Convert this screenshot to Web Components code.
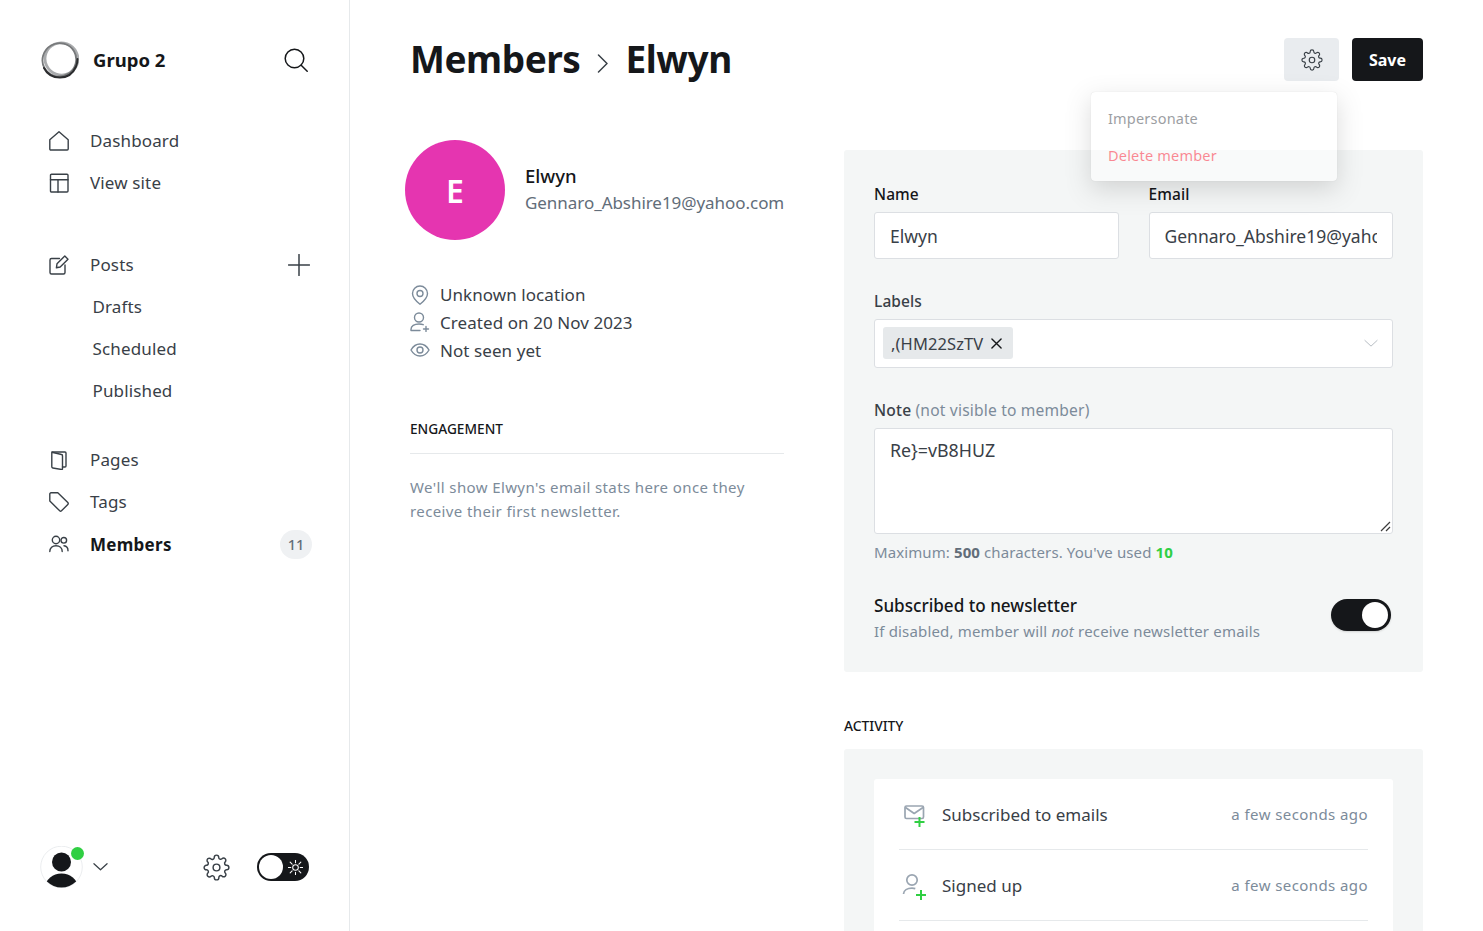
<!DOCTYPE html>
<html lang="en">
<head>
<meta charset="utf-8">
<title>Members - Elwyn</title>
<style>
  html, body { margin: 0; height: 100%; overflow: hidden; background: #fff; }
  body { font-family: "Noto Sans", "Open Sans", sans-serif; color: #15171a; }
</style>
</head>
<body>
<member-app></member-app>

<script>
const GEAR = `<path d="M12 15a3 3 0 1 0 0-6 3 3 0 0 0 0 6z"/><path d="M19.4 15a1.65 1.65 0 0 0 .33 1.82l.06.06a2 2 0 0 1 0 2.83 2 2 0 0 1-2.83 0l-.06-.06a1.65 1.65 0 0 0-1.82-.33 1.65 1.65 0 0 0-1 1.51V21a2 2 0 0 1-2 2 2 2 0 0 1-2-2v-.09A1.65 1.65 0 0 0 9 19.4a1.65 1.65 0 0 0-1.82.33l-.06.06a2 2 0 0 1-2.83 0 2 2 0 0 1 0-2.83l.06-.06a1.65 1.65 0 0 0 .33-1.82 1.65 1.65 0 0 0-1.51-1H3a2 2 0 0 1-2-2 2 2 0 0 1 2-2h.09A1.65 1.65 0 0 0 4.6 9a1.65 1.65 0 0 0-.33-1.82l-.06-.06a2 2 0 0 1 0-2.83 2 2 0 0 1 2.83 0l.06.06a1.65 1.65 0 0 0 1.82.33H9a1.65 1.65 0 0 0 1-1.51V3a2 2 0 0 1 2-2 2 2 0 0 1 2 2v.09a1.65 1.65 0 0 0 1 1.51 1.65 1.65 0 0 0 1.82-.33l.06-.06a2 2 0 0 1 2.83 0 2 2 0 0 1 0 2.83l-.06.06a1.65 1.65 0 0 0-.33 1.82V9a1.65 1.65 0 0 0 1.51 1H21a2 2 0 0 1 2 2 2 2 0 0 1-2 2h-.09a1.65 1.65 0 0 0-1.51 1z"/>`;

const ICONS = {
  home: `<path d="M.8 8.800 10 .8l9.200 8V18a1 1 0 0 1-1 1H1.800a1 1 0 0 1-1-1z"/>`,
  layout: `<rect x="1.500" y="1.200" width="17.500" height="17.800" rx="1"/><path d="M1.500 6.800H19M9 6.800V19"/>`,
  edit: `<path d="M10.500 3.500H2.500A1.500 1.500 0 0 0 1 5v12.500A1.500 1.500 0 0 0 2.500 19h12a1.500 1.500 0 0 0 1.500-1.500V10"/><path d="M8 8.800 15.800 1l3.200 3.200-7.800 7.800-3.800.8z"/>`,
  book: `<path d="M3 2.200 12.500 4.500a1.200 1.200 0 0 1 1 1.200v13a.8.8 0 0 1-1 .8L3.800 18a1.200 1.200 0 0 1-1-1.200V3z"/><path d="M3 2h13a1 1 0 0 1 1 1v13a1 1 0 0 1-1 1h-2.500"/>`,
  tag: `<path d="M.8 2a1.200 1.200 0 0 1 1.200-1.200h6.800l10 9.800a1.300 1.300 0 0 1 0 1.800l-6.300 6.400a1.300 1.300 0 0 1-1.800 0L.8 9z"/>`,
  members: `<circle cx="7" cy="6" r="3.700"/><path d="M.8 17.500c0-3.600 2.600-5.800 6.200-5.800s6.200 2.200 6.200 5.800"/><circle cx="14.800" cy="6.300" r="2.800"/><path d="M15 11.800c2.300.2 4 2 4 5"/>`,
  search: `<circle cx="10.500" cy="10.500" r="9.300"/><path d="m17.200 17.200 6 6"/>`,
  plus: `<path d="M11 .5v21M.5 11h21"/>`,
  chevron: `<path d="M1 1.500 8 8l7-6.500"/>`,
  chevronRight: `<path d="M1.500 1 10 9.500 1.500 18"/>`,
  gear: GEAR,
  pin: `<path d="M10 19.200C6.500 16.500 2.500 13 2.500 8.500a7.500 7.500 0 0 1 15 0c0 4.500-4 8-7.500 10.700z"/><circle cx="10" cy="8.500" r="3"/>`,
  useradd: `<circle cx="9" cy="5.500" r="4.500"/><path d="M1 18.500v-1.300c0-3.200 3.200-5.200 8-5.200 1.600 0 3 .2 4.200.7M1 18.500h9"/><path d="M16 14.500v5M13.500 17h5"/>`,
  eye: `<path d="M1 8c2.200-3.900 5.300-6 9-6s6.800 2.100 9 6c-2.200 3.900-5.300 6-9 6s-6.800-2.100-9-6z"/><circle cx="10" cy="8" r="3"/>`,
  close: `<path d="M1 1l10 10M11 1 1 11"/>`,
  sun: `<circle cx="8" cy="8" r="3"/><path d="M8 0v3M8 13v3M0 8h3M13 8h3M2.300 2.300l2.100 2.100M11.600 11.600l2.100 2.100M2.300 13.700l2.100-2.100M11.600 4.400l2.100-2.100"/>`
};

const VIEWBOX = {
  home: "0 0 20 20", layout: "0 0 20 20", edit: "0 0 20 20", book: "0 0 20 20", tag: "0 0 20 20",
  members: "0 0 20 20", search: "0 0 24 24", plus: "0 0 22 22", chevron: "0 0 16 10", chevronRight: "0 0 12 19",
  gear: "0 0 24 24", pin: "0 0 20 20", useradd: "0 0 20 20", eye: "0 0 20 16", close: "0 0 12 12", sun: "0 0 16 16"
};

class GhIcon extends HTMLElement {
  connectedCallback() {
    const name = this.getAttribute("name");
    const w = this.getAttribute("w") || 20;
    const h = this.getAttribute("h") || w;
    const sw = this.getAttribute("sw") || 1.4;
    this.attachShadow({ mode: "open" }).innerHTML = `
      <style>
        :host { display: inline-flex; flex: none; color: inherit; }
        svg { display: block; fill: none; stroke: currentColor; stroke-linecap: round; stroke-linejoin: round; }
      </style>
      <svg width="${w}" height="${h}" viewBox="${VIEWBOX[name]}" stroke-width="${sw}">${ICONS[name]}</svg>`;
  }
}
customElements.define("gh-icon", GhIcon);

class NavItem extends HTMLElement {
  connectedCallback() {
    const icon = this.getAttribute("icon");
    this.attachShadow({ mode: "open" }).innerHTML = `
      <style>
        :host { display: flex; align-items: center; height: 42px; padding: 0 37px 0 49px; color: #394047; font-size: 17px; letter-spacing: .14px; }
        :host([sub]) { padding-left: 92.500px; }
        :host([active]) { color: #15171a; font-weight: 700; font-size: 17px; letter-spacing: .28px; }
        gh-icon { margin-right: 21px; color: #394047; }
        .label { flex: 1; margin-top: -2px; }
        :host([active]) .label { margin-top: 0; }
      </style>
      ${icon ? `<gh-icon name="${icon}" w="20"></gh-icon>` : ""}
      <span class="label"><slot></slot></span>
      <slot name="end"></slot>`;
  }
}
customElements.define("nav-item", NavItem);

class ThemeSwitch extends HTMLElement {
  constructor() {
    super();
    this.attachShadow({ mode: "open" }).innerHTML = `
      <style>
        :host { display: flex; align-items: center; justify-content: flex-end; width: 52px; height: 28px; box-sizing: border-box; padding-right: 6px; border-radius: 14px; background: #15171a; position: relative; color: #fff; }
        .knob { position: absolute; left: 2px; top: 2px; width: 24px; height: 24px; border-radius: 50%; background: #fff; }
      </style>
      <span class="knob"></span>
      <gh-icon name="sun" w="15" sw="1.100"></gh-icon>`;
  }
}
customElements.define("theme-switch", ThemeSwitch);

class AppSidebar extends HTMLElement {
  constructor() {
    super();
    this.attachShadow({ mode: "open" }).innerHTML = `
      <style>
        :host { display: flex; flex-direction: column; flex: none; width: 350px; height: 100vh; box-sizing: border-box; border-right: 1px solid #e6e9eb; }
        .brand { display: flex; align-items: center; height: 40px; margin-top: 40px; padding: 0 41px; font-weight: 700; font-size: 18.500px; color: #15171a; }
        .brand svg { flex: none; margin-right: 14px; }
        .brand span { flex: 1; margin-top: -2px; }
        nav { margin-top: 40px; }
        nav + nav { margin-top: 40px; }
        nav.pages { margin-top: 27px; }
        .plus { color: #394047; margin-right: 2px; }
        .badge { display: flex; align-items: center; justify-content: center; width: 32px; height: 29px; border-radius: 15px; background: #eff1f3; color: #626d79; font-size: 14.500px; font-weight: 500; letter-spacing: 0; }
        .foot { display: flex; align-items: center; margin-top: auto; height: 42px; padding: 0 40px 43px 40px; }
        .avatar { position: relative; width: 43px; height: 42px; flex: none; }
        .dot { position: absolute; left: 31px; top: 1px; width: 13px; height: 13px; border-radius: 50%; background: #30cf43; }
        .caret { margin-left: 10px; color: #394047; }
        .cog { margin-left: 95px; color: #394047; }
        theme-switch { margin-left: 27px; }
      </style>
      <div class="brand">
        <svg width="38" height="38" viewBox="0 0 38 38" fill="none">
          <ellipse cx="20" cy="17.500" rx="16.500" ry="16" stroke="#a9abad" stroke-width="2.800" transform="rotate(20 19 19)"/>
          <ellipse cx="18.500" cy="18.500" rx="17" ry="16.500" stroke="#77797b" stroke-width="1.800" transform="rotate(-30 19 19)"/>
          <path d="M3 27C6 33 12 36.500 19 36.500c7 0 13-4 16-11 1-2.500 1.500-5 1.500-7.500" stroke="#2b2c2e" stroke-width="2" stroke-linecap="round"/>
        </svg>
        <span>Grupo 2</span>
        <gh-icon name="search" w="24" sw="1.500" style="color:#15171a"></gh-icon>
      </div>
      <nav>
        <nav-item icon="home">Dashboard</nav-item>
        <nav-item icon="layout">View site</nav-item>
      </nav>
      <nav>
        <nav-item icon="edit">Posts<gh-icon slot="end" class="plus" name="plus" w="22" sw="1.500"></gh-icon></nav-item>
        <nav-item sub>Drafts</nav-item>
        <nav-item sub>Scheduled</nav-item>
        <nav-item sub>Published</nav-item>
      </nav>
      <nav class="pages">
        <nav-item icon="book">Pages</nav-item>
        <nav-item icon="tag">Tags</nav-item>
        <nav-item icon="members" active>Members<span slot="end" class="badge">11</span></nav-item>
      </nav>
      <div class="foot">
        <div class="avatar">
          <svg width="43" height="42" viewBox="0 0 43 42">
            <defs><clipPath id="c"><circle cx="21.500" cy="21" r="20.500"/></clipPath></defs>
            <circle cx="21.500" cy="21" r="20.800" fill="#fff" stroke="#e6e9eb" stroke-width=".8"/>
            <circle cx="21.500" cy="16" r="9.500" fill="#15171a"/>
            <ellipse cx="21.500" cy="41" rx="16" ry="13.500" fill="#15171a" clip-path="url(#c)"/>
          </svg>
          <span class="dot"></span>
        </div>
        <gh-icon class="caret" name="chevron" w="15" h="10" sw="1.300"></gh-icon>
        <gh-icon class="cog" name="gear" w="27" sw="1.300"></gh-icon>
        <theme-switch></theme-switch>
      </div>`;
  }
}
customElements.define("app-sidebar", AppSidebar);

class PageHeader extends HTMLElement {
  constructor() {
    super();
    this.attachShadow({ mode: "open" }).innerHTML = `
      <style>
        :host { display: flex; align-items: center; height: 43px; position: relative; }
        h1 { flex: 1; display: flex; align-items: center; margin: -2px 0 0; font-size: 37px; font-weight: 700; letter-spacing: -.45px; color: #15171a; }
        h1 gh-icon { margin: 10px 17px 0 16px; color: #394047; }
        button { border: 0; height: 43px; padding: 0; border-radius: 4px; font: inherit; display: flex; align-items: center; justify-content: center; }
        .cog { width: 55px; background: #e9ecef; color: #394047; margin-right: 13px; }
        .save { width: 71px; background: #15171a; color: #fff; font-weight: 700; font-size: 16px; }
      </style>
      <h1>Members<gh-icon name="chevronRight" w="12" h="19" sw="1.500"></gh-icon>Elwyn</h1>
      <button class="cog"><gh-icon name="gear" w="22" sw="1.250"></gh-icon></button>
      <button class="save">Save</button>
      <slot></slot>`;
  }
}
customElements.define("page-header", PageHeader);

class ActionMenu extends HTMLElement {
  constructor() {
    super();
    this.attachShadow({ mode: "open" }).innerHTML = `
      <style>
        :host { position: absolute; top: 54px; right: 86px; width: 246px; height: 89px; box-sizing: border-box; padding: 7px 17px; z-index: 5; background: #fff; border-radius: 4px; opacity: .5; box-shadow: 0 0 1px rgba(0,0,0,.3), 0 8px 24px rgba(0,0,0,.28); font-size: 14.500px; letter-spacing: .2px; color: #394047; }
        div { height: 37px; display: flex; align-items: center; }
        .del { color: #ff1a33; }
      </style>
      <div>Impersonate</div>
      <div class="del">Delete member</div>`;
  }
}
customElements.define("action-menu", ActionMenu);

class MemberSummary extends HTMLElement {
  constructor() {
    super();
    this.attachShadow({ mode: "open" }).innerHTML = `
      <style>
        :host { display: block; color: #394047; font-size: 17px; }
        .head { display: flex; align-items: center; margin-left: -5px; }
        .pic { width: 100px; height: 100px; flex: none; border-radius: 50%; background: #e535b0; color: #fff; display: flex; align-items: center; justify-content: center; font-size: 32px; font-weight: 600; margin-right: 20px; }
        .name { font-size: 18.500px; font-weight: 500; color: #15171a; line-height: 26px; margin-top: -2px; }
        .mail { line-height: 26px; margin: 1px 0 -1px; color: #626d79; white-space: nowrap; letter-spacing: -.05px; }
        .facts { margin-top: 40px; letter-spacing: .07px; }
        .fact { display: flex; align-items: center; height: 28px; }
        .fact gh-icon { width: 20px; justify-content: center; margin-right: 10px; color: #7c8b9a; }
        .fact:first-child gh-icon { margin-top: 1px; }
        h4 { margin: 55px 0 0; height: 35px; box-sizing: border-box; font-size: 13.700px; line-height: 20px; font-weight: 500; color: #15171a; border-bottom: 1px solid #e6e9eb; }
        p { margin: 21px 0 0; font-size: 15px; line-height: 24px; color: #7c8b9a; letter-spacing: .39px; }
      </style>
      <div class="head">
        <div class="pic">E</div>
        <div><div class="name">Elwyn</div><div class="mail">Gennaro_Abshire19@yahoo.com</div></div>
      </div>
      <div class="facts">
        <div class="fact"><gh-icon name="pin" w="20" sw="1.400"></gh-icon>Unknown location</div>
        <div class="fact"><gh-icon name="useradd" w="20" sw="1.400"></gh-icon>Created on 20 Nov 2023</div>
        <div class="fact"><gh-icon name="eye" w="20" h="16" sw="1.400"></gh-icon>Not seen yet</div>
      </div>
      <h4>ENGAGEMENT</h4>
      <p>We'll show Elwyn's email stats here once they receive their first newsletter.</p>`;
  }
}
customElements.define("member-summary", MemberSummary);

class FormField extends HTMLElement {
  connectedCallback() {
    this.attachShadow({ mode: "open" }).innerHTML = `
      <style>
        :host { display: block; min-width: 0; }
        .lab { height: 28px; line-height: 28px; margin-bottom: 4px; font-size: 15.500px; font-weight: 500; color: #15171a; letter-spacing: .1px; }
        .box { box-sizing: border-box; display: flex; align-items: center; height: 47px; padding: 0 15px; background: #fff; border: 1px solid #dcdfe3; border-radius: 3px; font-size: 17.500px; color: #394047; }
        .clip { overflow: hidden; white-space: nowrap; }
      </style>
      <div class="lab">${this.getAttribute("label")}</div>
      <div class="box"><div class="clip"><slot></slot></div></div>`;
  }
}
customElements.define("form-field", FormField);

class LabelPicker extends HTMLElement {
  constructor() {
    super();
    this.attachShadow({ mode: "open" }).innerHTML = `
      <style>
        :host { display: block; margin-top: 28px; }
        .lab { height: 28px; line-height: 28px; margin-bottom: 4px; font-size: 15.500px; font-weight: 500; color: #394047; letter-spacing: .1px; }
        .box { box-sizing: border-box; display: flex; align-items: center; justify-content: space-between; height: 49px; padding: 0 14px 0 8px; background: #fff; border: 1px solid #dcdfe3; border-radius: 3px; }
        .chip { display: flex; align-items: center; height: 32px; margin-top: -1px; padding: 0 11px 0 8px; border-radius: 3px; background: #e6e9eb; color: #394047; font-size: 16.500px; letter-spacing: .1px; }
        .chip gh-icon { margin-left: 8px; color: #15171a; }
        .arrow { color: #b4bac1; }
      </style>
      <div class="lab">Labels</div>
      <div class="box">
        <span class="chip">,(HM22SzTV<gh-icon name="close" w="11" sw="1.500"></gh-icon></span>
        <gh-icon class="arrow" name="chevron" w="14" h="9" sw="1.100"></gh-icon>
      </div>`;
  }
}
customElements.define("label-picker", LabelPicker);

class NoteField extends HTMLElement {
  constructor() {
    super();
    this.attachShadow({ mode: "open" }).innerHTML = `
      <style>
        :host { display: block; margin-top: 28px; }
        .lab { height: 28px; line-height: 28px; margin-bottom: 4px; font-size: 15.600px; font-weight: 500; color: #394047; letter-spacing: .18px; }
        .lab span { font-weight: 400; color: #7c8b9a; }
        .area { position: relative; box-sizing: border-box; height: 106px; padding: 8px 15px; background: #fff; border: 1px solid #dcdfe3; border-radius: 3px; font-size: 17.800px; line-height: 26px; color: #394047; }
        .grip { position: absolute; right: 1px; bottom: 1px; display: block; }
        .count { height: 24px; line-height: 24px; margin-top: 6px; font-size: 15px; color: #7c8b9a; letter-spacing: .1px; }
        .count b { font-weight: 700; color: #626d79; }
        .count b.ok { color: #30cf43; }
      </style>
      <div class="lab">Note <span>(not visible to member)</span></div>
      <div class="area">Re}=vB8HUZ<svg class="grip" width="11" height="11" viewBox="0 0 11 11" stroke="#3c3c3c" stroke-width="1.200" fill="none"><path d="M1 10 10 1M6 10l4-4"/></svg></div>
      <div class="count">Maximum: <b>500</b> characters. You've used <b class="ok">10</b></div>`;
  }
}
customElements.define("note-field", NoteField);

class NewsletterToggle extends HTMLElement {
  constructor() {
    super();
    this.attachShadow({ mode: "open" }).innerHTML = `
      <style>
        :host { display: flex; align-items: center; justify-content: space-between; margin: 29px 0 -1px; }
        .t { font-size: 17.100px; line-height: 26px; font-weight: 500; color: #15171a; }
        .d { font-size: 15px; line-height: 24px; color: #7c8b9a; letter-spacing: .17px; }
        .sw { position: relative; width: 60px; height: 32px; margin: -6px 2px 0 0; border-radius: 16px; background: #15171a; box-shadow: 0 1px 2px rgba(0,0,0,.15); }
        .sw i { position: absolute; right: 3px; top: 3px; width: 26px; height: 26px; border-radius: 50%; background: #fff; }
      </style>
      <div>
        <div class="t">Subscribed to newsletter</div>
        <div class="d">If disabled, member will <em>not</em> receive newsletter emails</div>
      </div>
      <div class="sw"><i></i></div>`;
  }
}
customElements.define("newsletter-toggle", NewsletterToggle);

class ActivityRow extends HTMLElement {
  connectedCallback() {
    const kind = this.getAttribute("kind");
    const art = kind === "mail"
      ? `<rect x="3" y="6" width="18.500" height="12.500" rx="1.500"/><path d="m3.500 7.500 8.700 6 8.800-6"/><path d="M17.500 17v10M12.500 22h10" stroke="#30cf43" stroke-width="2"/>`
      : `<circle cx="10" cy="9" r="5.200"/><path d="M1.500 23c.2-3.500 3.800-5.800 8.500-5.800 1.200 0 2.300.1 3.300.4"/><path d="M19 19v10M14 24h10" stroke="#30cf43" stroke-width="2"/>`;
    this.attachShadow({ mode: "open" }).innerHTML = `
      <style>
        :host { display: flex; align-items: center; height: 70px; border-bottom: 1px solid #e6e9eb; font-size: 17px; color: #394047; }
        svg { flex: none; margin: 0 14px 0 3px; }
        .txt { flex: 1; }
        .ago { font-size: 15px; color: #7c8b9a; letter-spacing: .42px; }
      </style>
      <svg width="26" height="28" viewBox="0 0 26 28" fill="none" stroke="#9aa5b1" stroke-width="1.700" stroke-linejoin="round" overflow="visible">${art}</svg>
      <span class="txt"><slot></slot></span>
      <span class="ago">a few seconds ago</span>`;
  }
}
customElements.define("activity-row", ActivityRow);

class MemberApp extends HTMLElement {
  constructor() {
    super();
    this.attachShadow({ mode: "open" }).innerHTML = `
      <style>
        :host { display: flex; height: 100vh; overflow: hidden; }
        main { flex: 1; min-width: 0; padding: 38px 60px 0; }
        .cols { display: grid; grid-template-columns: 374px 579px; gap: 60px; margin-top: 59px; }
        .right { padding-top: 10px; }
        .panel { padding: 30px; background: #f4f6f6; border-radius: 3px; }
        .pair { display: grid; grid-template-columns: 1fr 1fr; gap: 30px; }
        h4 { margin: 44px 0 13px; font-size: 13.800px; line-height: 20px; font-weight: 500; color: #15171a; }
        .card { padding: 0 25px; background: #fff; border-radius: 3px; }
        .card .more { height: 71px; }
      </style>
      <app-sidebar></app-sidebar>
      <main>
        <page-header><action-menu></action-menu></page-header>
        <div class="cols">
          <member-summary></member-summary>
          <div class="right">
            <section class="panel">
              <div class="pair">
                <form-field label="Name">Elwyn</form-field>
                <form-field label="Email">Gennaro_Abshire19@yahoo.com</form-field>
              </div>
              <label-picker></label-picker>
              <note-field></note-field>
              <newsletter-toggle></newsletter-toggle>
            </section>
            <h4>ACTIVITY</h4>
            <section class="panel">
              <div class="card">
                <activity-row kind="mail">Subscribed to emails</activity-row>
                <activity-row kind="user">Signed up</activity-row>
                <div class="more"></div>
              </div>
            </section>
          </div>
        </div>
      </main>`;
  }
}
customElements.define("member-app", MemberApp);
</script>
</body>
</html>
